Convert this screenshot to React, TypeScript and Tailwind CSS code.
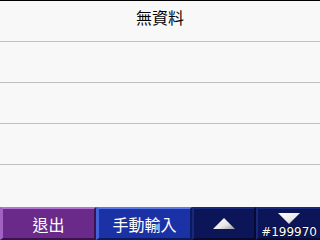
import React from "react";

const cjk = { fontFamily: '"Noto Sans CJK TC", "Noto Sans CJK SC", sans-serif' };

export default function App() {
  return (
    <div className="w-[320px] h-[240px] bg-[#f8f8f8] flex flex-col overflow-hidden relative border-t border-black" style={cjk}>
      <div className="h-[41px] shrink-0 border-b border-[#c0c0c0] flex items-center justify-center text-[16px] text-black leading-none pb-[9px]">
        無資料
      </div>
      <div className="h-[41px] shrink-0 border-b border-[#c0c0c0]" />
      <div className="h-[41px] shrink-0 border-b border-[#c0c0c0]" />
      <div className="h-[41px] shrink-0 border-b border-[#c0c0c0]" />
      <div className="flex-1" />
      <div className="h-[33px] shrink-0 flex">
        <div className="w-[96px] flex items-center justify-center bg-[#6a2a8a] border-t-2 border-t-[#b474d4] border-l-[3px] border-l-[#a262c2] border-r-2 border-r-[#3a1250] border-b-2 border-b-[#3a1250] text-white text-[16px] leading-none">
          退出
        </div>
        <div className="w-[96px] flex items-center justify-center bg-[#1a32a6] border-t-2 border-t-[#5a78e6] border-l-[3px] border-l-[#4462d8] border-r-2 border-r-[#0a1a60] border-b-2 border-b-[#0a1a60] text-white text-[16px] leading-none">
          手動輸入
        </div>
        <div className="w-[64px] flex items-center justify-center bg-[#0b1558] border-t-2 border-t-[#1a2a7c] border-l-2 border-l-[#1a2878] border-r-2 border-r-[#050a30] border-b-2 border-b-[#050a30]">
          <svg width="22" height="11" viewBox="0 0 22 11">
            <defs>
              <linearGradient id="gu" x1="0" y1="0" x2="1" y2="1">
                <stop offset="0" stopColor="#ffffff" />
                <stop offset="0.6" stopColor="#e8e8e8" />
                <stop offset="1" stopColor="#9a9a9a" />
              </linearGradient>
            </defs>
            <polygon points="11,0 22,11 0,11" fill="url(#gu)" />
          </svg>
        </div>
        <div className="flex-1 flex items-start justify-center pt-[4px] bg-[#0b1558] border-t-2 border-t-[#1a2a7c] border-l-2 border-l-[#1a2878] border-b-2 border-b-[#050a30]">
          <svg width="22" height="11" viewBox="0 0 22 11">
            <defs>
              <linearGradient id="gd" x1="0" y1="0" x2="1" y2="1">
                <stop offset="0" stopColor="#ffffff" />
                <stop offset="0.6" stopColor="#e8e8e8" />
                <stop offset="1" stopColor="#9a9a9a" />
              </linearGradient>
            </defs>
            <polygon points="0,0 22,0 11,11" fill="url(#gd)" />
          </svg>
        </div>
      </div>
      <div
        className="absolute right-[2px] bottom-[2px] text-white text-[12px] leading-none px-[1px] bg-[#0b1558]"
        style={{ fontFamily: '"DejaVu Sans", sans-serif', textShadow: "0 0 1px #000, 0 0 1px #000" }}
      >
        #199970
      </div>
    </div>
  );
}
